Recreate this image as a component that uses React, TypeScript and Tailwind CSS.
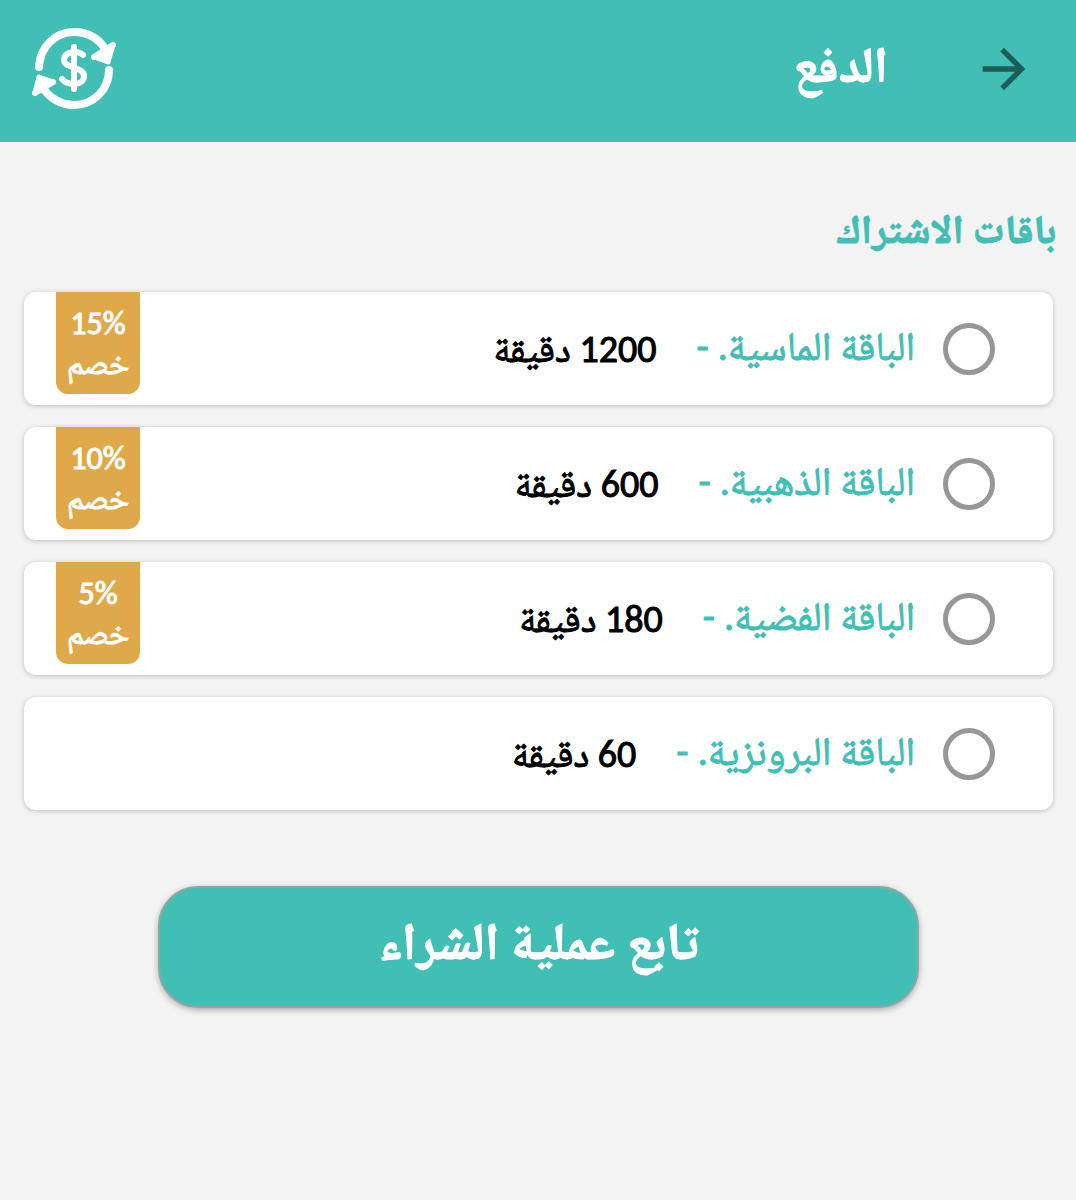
type Plan = {
  id: string;
  name: string;
  minutes: number;
  discount?: string;
};

const plans: Plan[] = [
  { id: 'diamond', name: 'الباقة الماسية.',    minutes: 1200, discount: '15%' },
  { id: 'gold',    name: 'الباقة الذهبية.',    minutes: 600,  discount: '10%' },
  { id: 'silver',  name: 'الباقة الفضية.',     minutes: 180,  discount: '5%' },
  { id: 'bronze',  name: 'الباقة البرونزية.',  minutes: 60 },
];

function RefundIcon() {
  return (
    <svg viewBox="0 0 86 84" className="h-[84px] w-[86px]" fill="none" stroke="currentColor" strokeLinecap="round" strokeLinejoin="round">
      {/* ring */}
      <path d="M9 40C10 20 25 5 44 5c14 0 25 7 32 18" strokeWidth="8" />
      <path d="M79 43C79 63 63 78 44 78c-14 0-26-8-33-20" strokeWidth="8" />
      {/* arrow heads */}
      <path d="M83 18L78 35L64 30Z" fill="currentColor" strokeWidth="5" />
      <path d="M5 66L9 50L23 55Z" fill="currentColor" strokeWidth="5" />
      <path d="M83 18L64 30M5 66L23 55" strokeWidth="6" />
      {/* dollar */}
      <path d="M44 20v42" strokeWidth="6" />
      <path d="M53 28C48 23 34 24 34 33c0 9 20 6 20 16 0 10-16 10-22 3" strokeWidth="6" />
    </svg>
  );
}

function PlanCard({ plan }: { plan: Plan }) {
  return (
    <li className="relative flex min-h-[113px] items-center rounded-xl bg-white ps-[58px] shadow-[0_1px_5px_rgba(0,0,0,0.22)]">
      <input
        id={plan.id}
        type="radio"
        name="plan"
        className="size-[52px] shrink-0 appearance-none rounded-full border-[5px] border-[#979797] bg-white checked:border-[#41bfb5] checked:bg-[#41bfb5] checked:shadow-[inset_0_0_0_8px_white]"
      />
      <label htmlFor={plan.id} className="flex flex-1 items-center gap-10 ps-7 leading-[52px] [-webkit-text-stroke:1px_currentColor]">
        <span className="pb-1 text-[40px] text-[#41bfb5]">{plan.name} -</span>
        <span className="text-[38px] text-black">{plan.minutes} دقيقة</span>
      </label>
      {plan.discount && (
        <div className="absolute end-8 top-0 flex h-[102px] w-[84px] flex-col items-center rounded-b-xl bg-[#dfa94a] pt-3 text-[32px] leading-10 text-white [-webkit-text-stroke:1px_currentColor]">
          <span dir="ltr">{plan.discount}</span>
          <span>خصم</span>
        </div>
      )}
    </li>
  );
}

export default function App() {
  return (
    <div dir="rtl" className="min-h-screen bg-[#f3f3f3] font-[Carlito,'Noto_Naskh_Arabic','Noto_Sans',sans-serif]">
      <header className="flex h-[142px] items-center bg-[#41bfb5] ps-10 pe-[30px] pb-1 text-white">
        <button type="button" aria-label="رجوع" className="text-[#1d5d58]">
          <svg viewBox="0 0 24 24" className="size-16" fill="currentColor">
            <path d="M12 4l-1.41 1.41L16.17 11H4v2h12.17l-5.58 5.59L12 20l8-8z" />
          </svg>
        </button>
        <h1 className="ms-[84px] flex-1 pb-2 text-[50px] leading-[64px] font-bold [-webkit-text-stroke:1px_currentColor]">
          الدفع
        </h1>
        <button type="button" aria-label="استرداد">
          <RefundIcon />
        </button>
      </header>

      <main className="ps-[23px] pe-6 pt-14">
        <h2 className="-ms-[3px] text-[40px] leading-[64px] font-bold text-[#41bfb5] [-webkit-text-stroke:1px_currentColor]">
          باقات الاشتراك
        </h2>
        <form>
          <ul className="mt-[30px] flex flex-col gap-[22px]">
            {plans.map(plan => <PlanCard key={plan.id} plan={plan} />)}
          </ul>
          <div className="mt-[76px] px-[134px]">
            <button
              type="button"
              className="h-[122px] w-full rounded-[40px] border-2 border-[#8aa9a5] bg-[#41bfb5] pb-3 text-[52px] leading-[64px] font-bold text-white shadow-[0_2px_6px_rgba(0,0,0,0.3)] [-webkit-text-stroke:1px_currentColor]"
            >
              تابع عملية الشراء
            </button>
          </div>
        </form>
      </main>
    </div>
  );
}
